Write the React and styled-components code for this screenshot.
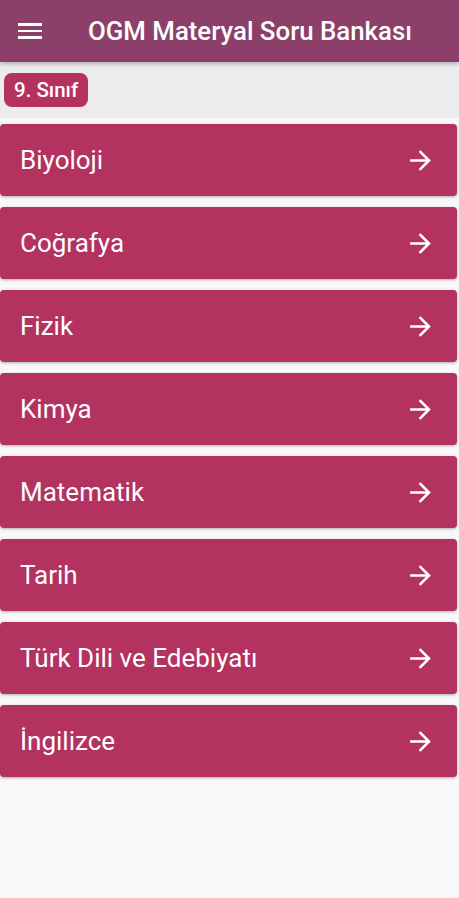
import React from "react";
import styled, { createGlobalStyle } from "styled-components";

const GlobalStyle = createGlobalStyle`
  html, body {
    margin: 0;
    padding: 0;
    background: #f8f8f8;
    font-family: Roboto, "Noto Sans", sans-serif;
  }
`;

const subjects = [
  "Biyoloji",
  "Coğrafya",
  "Fizik",
  "Kimya",
  "Matematik",
  "Tarih",
  "Türk Dili ve Edebiyatı",
  "İngilizce",
];

const App = () => {
  return (
    <Page>
      <GlobalStyle />
      <AppBar>
        <MenuButton aria-label="menu">
          <span />
          <span />
          <span />
        </MenuButton>
        <Title>OGM Materyal Soru Bankası</Title>
      </AppBar>
      <ClassBar>
        <Chip>9. Sınıf</Chip>
      </ClassBar>
      <List>
        {subjects.map((s) => (
          <Card key={s}>
            <CardLabel>{s}</CardLabel>
            <Arrow />
          </Card>
        ))}
      </List>
    </Page>
  );
};

const Arrow = () => (
  <svg width="31" height="31" viewBox="0 0 24 24" fill="#fff">
    <path d="M12 4l-1.41 1.41L16.17 11H4v2h12.17l-5.58 5.59L12 20l8-8z" />
  </svg>
);

export default App;

const Page = styled.div`
  min-height: 898px;
  background: #f8f8f8;
`;

const AppBar = styled.header`
  height: 62px;
  background: #8b3f69;
  display: flex;
  align-items: center;
  box-shadow: 0 2px 4px rgba(0, 0, 0, 0.25);
  position: relative;
  z-index: 1;
`;

const MenuButton = styled.div`
  width: 24px;
  margin-left: 18px;
  margin-right: 46px;
  display: flex;
  flex-direction: column;
  gap: 4px;

  span {
    display: block;
    height: 2.5px;
    background: #fff;
  }
`;

const Title = styled.h1`
  margin: 0;
  color: #fff;
  font-size: 25.8px;
  font-weight: 500;
`;

const ClassBar = styled.div`
  background: #ececec;
  height: 56px;
  display: flex;
  align-items: center;
  padding-left: 4px;
`;

const Chip = styled.div`
  background: #b5325f;
  color: #fff;
  font-size: 20.5px;
  font-weight: 500;
  padding: 0 10px;
  height: 34px;
  line-height: 34px;
  border-radius: 8px;
`;

const List = styled.div`
  display: flex;
  flex-direction: column;
  gap: 11px;
  padding: 6px 2px 0 0;
`;

const Card = styled.div`
  height: 72px;
  background: #b3325f;
  border-radius: 4px;
  box-shadow: 0 1px 3px rgba(0, 0, 0, 0.3);
  display: flex;
  align-items: center;
  justify-content: space-between;
  padding: 0 21px 0 20px;
`;

const CardLabel = styled.span`
  color: #fff;
  font-size: 26px;
  font-weight: 400;
`;
